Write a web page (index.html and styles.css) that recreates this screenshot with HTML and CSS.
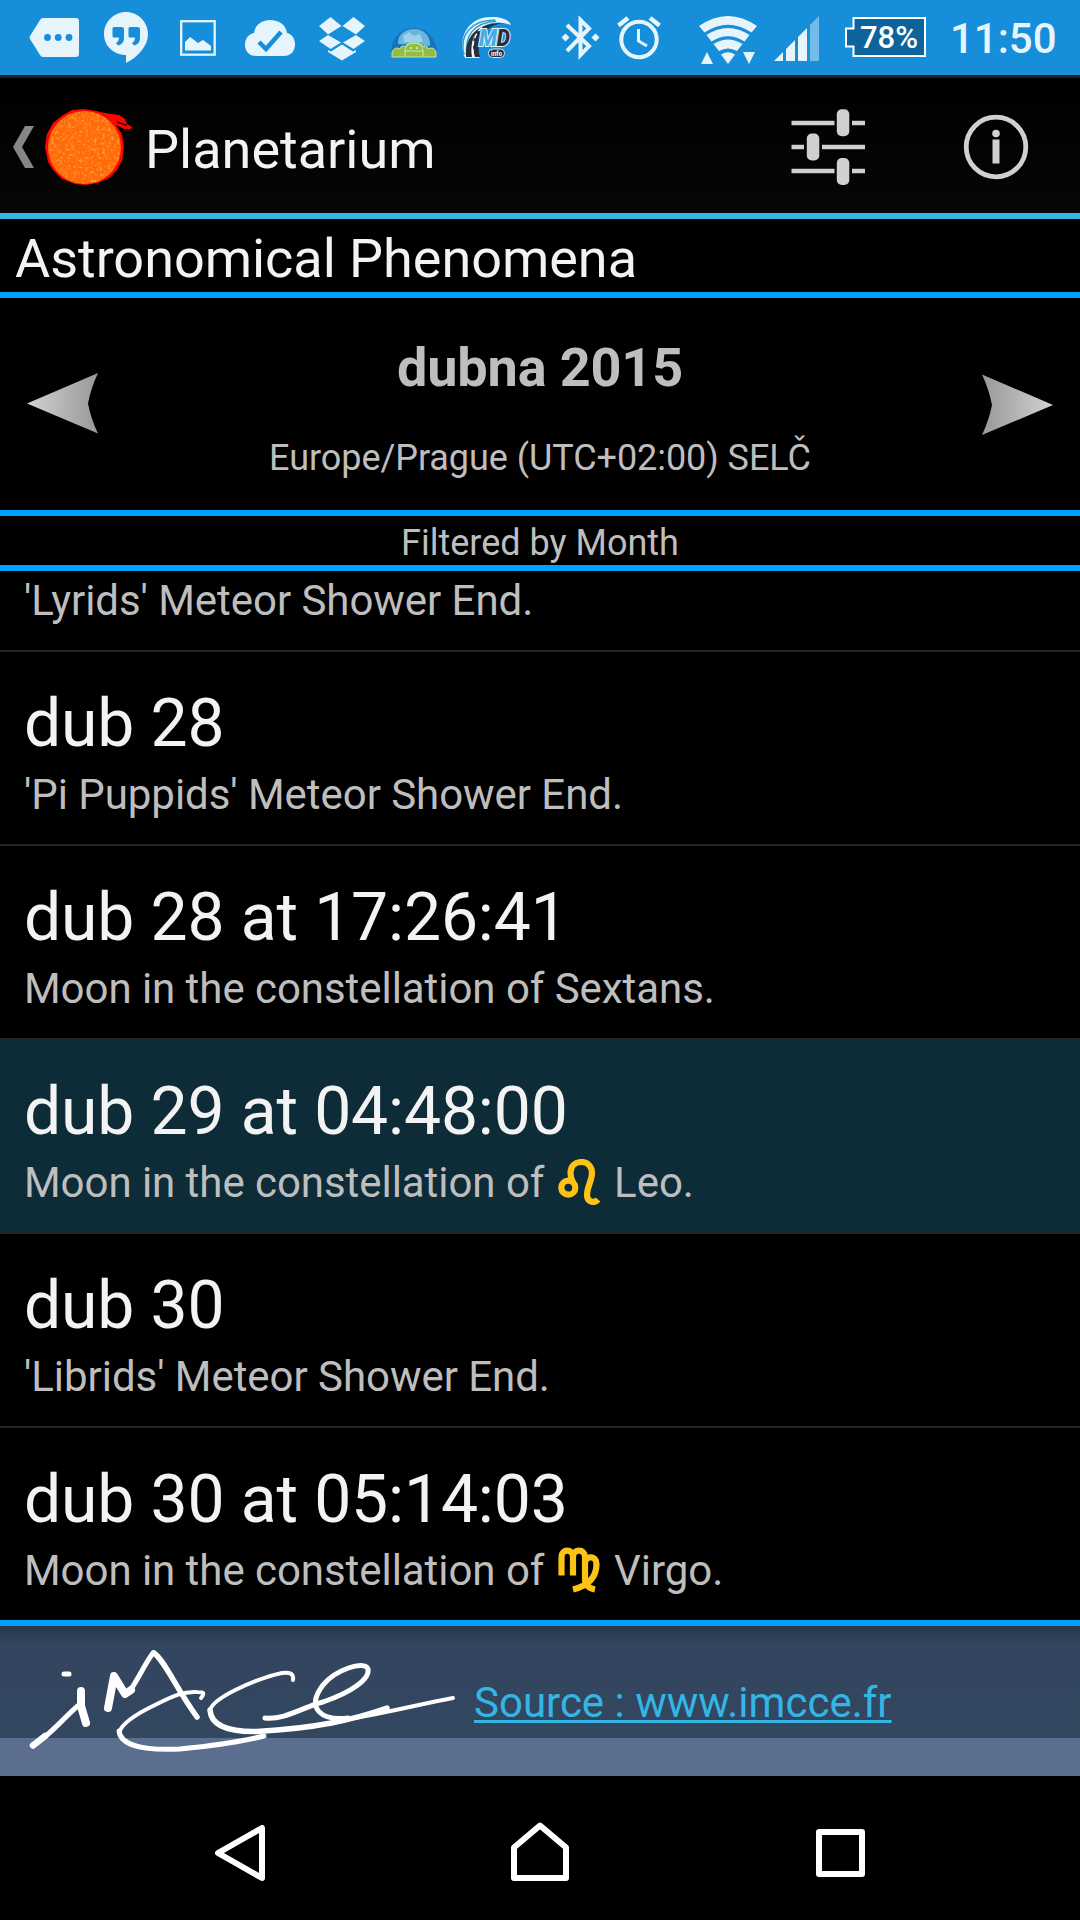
FILE: index.html
```
<!DOCTYPE html>
<html lang="en">
<head>
    <meta charset="UTF-8">
    <meta name="viewport" content="width=device-width, initial-scale=1.0">
    <title>Planetarium</title>
    <link rel="stylesheet" href="styles.css">
</head>
<body>
    <div class="status-bar">
        <!-- notifications -->
        <svg width="102" height="75" viewBox="0 0 102 75">
            <path d="M43 18H76Q79 18 79 21V54Q79 57 76 57H43Q41 57 40 55L30 39Q29 37.500 30 36L40 20Q41 18 43 18Z" fill="#e6f4fc"/>
            <g fill="#168eda"><circle cx="47.500" cy="37.500" r="3.400"/><circle cx="58.200" cy="37.500" r="3.400"/><circle cx="69" cy="37.500" r="3.400"/></g>
        </svg>
        <svg width="60" height="75" viewBox="102 0 60 75">
            <path d="M126 12C138 12 148 22 148 34C148 46 138 57 126 63V55C114 55 104 46 104 34C104 22 114 12 126 12Z" fill="#e6f4fc"/>
            <path d="M114 27H122Q124 27 124 29V38Q124 44 118 45.500L116 43Q119 41 119 37.500H114Q112.500 37.500 112.500 36V28.500Q112.500 27 114 27ZM130 27H138Q140 27 140 29V38Q140 44 134 45.500L132 43Q135 41 135 37.500H130Q128.500 37.500 128.500 36V28.500Q128.500 27 130 27Z" fill="#168eda"/>
        </svg>
        <svg width="68" height="75" viewBox="162 0 68 75">
            <rect x="181.200" y="21.200" width="33.500" height="33.500" fill="none" stroke="#e6f4fc" stroke-width="2.300"/>
            <path d="M185 50.500V42L190 37L198 43L203 40L211 46V50.500Z" fill="#e6f4fc"/>
        </svg>
        <svg width="78" height="75" viewBox="230 0 78 75">
            <path d="M256 56C249 56 245 51 245 45C245 38 249 34 254 33C255 25 262 20 270 20C279 20 286 25 287 33C292 34 295 39 295 44C295 51 291 56 284 56Z" fill="#e6f4fc"/>
            <path d="M259 42L266 49L281 32" fill="none" stroke="#168eda" stroke-width="4.500"/>
        </svg>
        <svg width="72" height="75" viewBox="308 0 72 75">
            <path d="M330.500 17L341.500 26L328 34.500L319 26ZM353.500 17L365 26L356 34.500L342.500 26ZM319 41L328 35L341 42.500L330.500 49ZM365 41L356 35L343 42.500L353.500 49ZM328 50L331 51.500L342 44.500L353 51.500L356 50V52L342 60.500L328 52Z" fill="#e6f4fc"/>
        </svg>
        <svg width="68" height="75" viewBox="380 0 68 75">
            <path d="M391 56C390 38 401 28 414 28C427 28 438 39 437 56Z" fill="#1574b8"/>
            <path d="M398 44C397 34 406 29 414 29C424 29 431 36 430 46Z" fill="#69b5de"/>
            <path d="M403 36L409 32L414 36L420 34L423 42H404Z" fill="#9ed0e8"/>
            <path d="M392 57V52Q395 46 400 49Q402 44 405 47Q407 43 414 43Q421 43 423 47Q427 44 428 49Q434 46 436 52V57Z" fill="#91bd45" stroke="#cde1a0" stroke-width="1"/>
            <path d="M405 57V51Q406 43 414 43Q422 43 423 51V57M409 41L411 44M419 41L417 44M404 51H424" fill="none" stroke="#cde1a0" stroke-width="1"/>
            <g fill="#e4efcf"><circle cx="411" cy="48" r="1"/><circle cx="417" cy="48" r="1"/></g>
        </svg>
        <svg width="100" height="75" viewBox="448 0 100 75">
            <path d="M465 58C457 39 467 16 493 17C502 17 509 20 511 25C494 19 481 24 476 36C473 43 475 53 480 58Z" fill="#e6f4fc"/>
            <path d="M464 55C459 35 471 20 495 20M467 56C464 35 474 23 496 21" fill="none" stroke="#379fcb" stroke-width="1.500"/>
            <path d="M466 57C465 37 476 23 503 23C485 26 475 38 480 57H475C471 44 473 34 480 27C473 34 470 46 472 57Z" fill="#25303b"/>
            <path d="M473 54C472 43 475 32 483 27" fill="none" stroke="#fff" stroke-width="1.300" stroke-dasharray="5 3"/>
            <text x="479" y="46" class="md-text" fill="#45aee4" textLength="31" lengthAdjust="spacingAndGlyphs">M<tspan fill="#25303b">D</tspan></text>
            <rect x="488.500" y="49" width="16" height="8.500" rx="4" fill="#25303b" stroke="#d9e9f1"/>
            <text x="491" y="56" class="info-text" textLength="11" lengthAdjust="spacingAndGlyphs">info</text>
        </svg>
        <!-- system -->
        <svg width="62" height="75" viewBox="548 0 62 75">
            <path d="M567 25L589 46L580.500 55V20L589 28.500L567 51" fill="none" stroke="#e6f4fc" stroke-width="4"/>
            <path d="M561.500 37.500L565.500 33.500L569.500 37.500L565.500 41.500ZM591.500 37.500L595.500 33.500L599.500 37.500L595.500 41.500Z" fill="#e6f4fc"/>
        </svg>
        <svg width="80" height="75" viewBox="610 0 80 75">
            <circle cx="639" cy="39.500" r="17.700" fill="none" stroke="#e6f4fc" stroke-width="4"/>
            <path d="M638.500 29V41L647 46" fill="none" stroke="#e6f4fc" stroke-width="3"/>
            <path d="M618.500 25.500L628 18M659.500 25.500L650 18" stroke="#e6f4fc" stroke-width="4.500"/>
        </svg>
        <svg width="76" height="75" viewBox="690 0 76 75">
            <path d="M699 26Q728 6 757 26L751.500 32.500Q728 17 704.500 32.500ZM706.500 35Q728 21 749.500 35L744.500 41.500Q728 31 711.500 41.500ZM713.500 44Q728 35 742.500 44L737 51Q728 46 719 51ZM721 54.500Q728 50 735 54.500L728 64Z" fill="#e6f4fc"/>
            <path d="M701 64L707 52L713 64ZM743 52H755L749 64Z" fill="#e6f4fc"/>
        </svg>
        <svg width="74" height="75" viewBox="766 0 74 75">
            <path d="M774 61L783 52V61ZM786 49L795 40V61H786ZM798 37L807 28V61H798Z" fill="#e6f4fc"/>
            <path d="M810 25L819 16V61H810Z" fill="#73bbe9"/>
        </svg>
        <svg width="110" height="75" viewBox="840 0 110 75">
            <path d="M853.500 18H925V56H853.500V46.500H846V28.500H853.500Z" fill="#0d639b" stroke="#fff" stroke-width="2"/>
            <text x="860" y="48" class="battery-text">78%</text>
        </svg>
        <span class="clock">11:50</span>
    </div>

    <div class="action-bar">
        <svg width="145" height="135" viewBox="0 78 145 135">
            <defs>
                <filter id="grain" x="0" y="0" width="1" height="1">
                    <feTurbulence type="fractalNoise" baseFrequency="0.35" numOctaves="2" seed="4"/>
                    <feColorMatrix values="0 0 0 0 1  0 0 0 0 .65  0 0 0 0 .15  1.500 0 0 0 -.72"/>
                    <feComposite in2="SourceGraphic" operator="in"/>
                </filter>
            </defs>
            <path d="M34 126H25L13 147L25 168H34L22 147Z" fill="#868686"/>
            <path d="M63 115L72 110L84 109L96 111L105 113L119 115L125 119L127 124L132 127L131 129L124 129L116 125L122 134L124 147L122 161L117 170L109 178L98 183L86 185L75 184L62 179L53 170L48 162L45 147L47 134L53 123Z" fill="#fa0500"/>
            <circle cx="84.500" cy="147.500" r="36.500" fill="#ff6a0a"/>
            <circle cx="84.500" cy="147.500" r="36.500" filter="url(#grain)"/>
            <path d="M117 122L127 125.500" stroke="#100" stroke-width="1.200"/>
        </svg>
        <span class="app-name">Planetarium</span>
        <svg width="150" height="135" viewBox="750 78 150 135">
            <path d="M791.500 123H834.500M852 123H865M791.500 147H804M822 147H865M791.500 171H834.500M852 171H865" stroke="#d0d0d0" stroke-width="4.500"/>
            <g fill="#d0d0d0">
                <rect x="836.800" y="109.300" width="12.500" height="27" rx="5"/>
                <rect x="806.800" y="133.500" width="12.500" height="27" rx="5"/>
                <rect x="836.800" y="158" width="12.500" height="27" rx="5"/>
            </g>
        </svg>
        <svg width="180" height="135" viewBox="900 78 180 135">
            <circle cx="996" cy="147" r="29.800" fill="none" stroke="#d0d0d0" stroke-width="4.800"/>
            <circle cx="996" cy="133.500" r="3.800" fill="#d0d0d0"/>
            <rect x="992.500" y="139.500" width="7" height="24" fill="#d0d0d0"/>
        </svg>
    </div>

    <h1 class="page-title">Astronomical Phenomena</h1>

    <div class="month-picker">
        <svg width="120" height="212" viewBox="0 298 120 212">
            <linearGradient id="prev"><stop offset="0" stop-color="#d2d2d2"/><stop offset="1" stop-color="#989898"/></linearGradient>
            <path d="M27 403.500L98 373Q91 388 88 403.500Q91 419 98 433.500Z" fill="url(#prev)"/>
        </svg>
        <div class="month">
            <div class="month-name">dubna 2015</div>
            <div class="timezone">Europe/Prague (UTC+02:00) SELČ</div>
        </div>
        <svg width="120" height="212" viewBox="960 298 120 212">
            <linearGradient id="next"><stop offset="0" stop-color="#989898"/><stop offset="1" stop-color="#d2d2d2"/></linearGradient>
            <path d="M1053 405L982 374.500Q989 389.500 992 405Q989 420 982 435Z" fill="url(#next)"/>
        </svg>
    </div>

    <div class="filter">Filtered by Month</div>

    <ul class="events">
        <li class="first">
            <p>'Lyrids' Meteor Shower End.</p>
        </li>
        <li>
            <h2>dub 28</h2>
            <p>'Pi Puppids' Meteor Shower End.</p>
        </li>
        <li>
            <h2>dub 28 at 17:26:41</h2>
            <p>Moon in the constellation of Sextans.</p>
        </li>
        <li class="current">
            <h2>dub 29 at 04:48:00</h2>
            <p>Moon in the constellation of
                <svg class="sign" width="42" height="46" viewBox="0 0 42 46"><circle cx="10.300" cy="28.700" r="7"/><path d="M15 24C13 20 12.500 17 12.500 14C12.500 7 17 3 23.500 3C30 3 34 8 34 14C34 22 29 27 29 36C29 43 36 45 40 40.500"/></svg>
                Leo.</p>
        </li>
        <li>
            <h2>dub 30</h2>
            <p>'Librids' Meteor Shower End.</p>
        </li>
        <li>
            <h2>dub 30 at 05:14:03</h2>
            <p>Moon in the constellation of
                <svg class="sign" width="42" height="46" viewBox="0 0 42 46"><path d="M3.500 28.500V10C3.500 1.500 15 1.500 15 10V28.500M15 10C15 1.500 27 1.500 27 10V32C27 38 30 41 37 42.500M27 15C29 8 38.500 9 38.500 17C38.500 31 29 39 15 42.500"/></svg>
                Virgo.</p>
        </li>
    </ul>

    <div class="source">
        <svg width="474" height="150" viewBox="0 1626 474 150">
            <g fill="none" stroke="#fff" stroke-linecap="round" stroke-linejoin="round">
                <path d="M64 1674H69" stroke-width="5"/>
                <path d="M33 1745C48 1738 64 1717 80 1704" stroke-width="5"/>
                <path d="M33 1745.500L45 1736" stroke-width="6.500"/>
                <path d="M81 1691L81 1706L86 1723" stroke-width="8"/>
                <path d="M108 1708L114 1676L125 1694L131 1690" stroke-width="8"/>
                <path d="M129 1692C138 1680 144 1665 153 1653" stroke-width="5"/>
                <path d="M154 1653C165 1661 176 1688 197 1717" stroke-width="5.500"/>
                <path d="M201 1698C205 1693 204 1692 197 1692C184 1691 173 1696 157 1704C138 1713 121 1724 119 1733" stroke-width="4"/>
                <path d="M119 1731C120 1743 138 1751 180 1749C212 1746 240 1742 264 1736" stroke-width="5"/>
                <path d="M293 1680C294 1673 289 1672 282 1673C258 1678 211 1698 210 1711" stroke-width="4"/>
                <path d="M210 1710C211 1726 229 1732 257 1731.500C316 1728 353 1720 387 1708" stroke-width="5.500"/>
                <path d="M265 1718C285 1720 303 1707 323 1702C352 1692 370 1679 368 1669C364 1660 335 1670 323 1685C305 1709 322 1721 348 1718" stroke-width="5"/>
                <path d="M348 1719C388 1713 420 1704 453 1698" stroke-width="4"/>
            </g>
        </svg>
        <a href="#">Source : www.imcce.fr</a>
    </div>

    <div class="nav-bar">
        <svg width="1080" height="144" viewBox="0 1776 1080 144" fill="none" stroke="#fff" stroke-width="6" stroke-linejoin="round">
            <path d="M218 1853L262 1828V1878Z"/>
            <path d="M514 1878V1847.500L540 1825.500L566 1847.500V1878Z"/>
            <rect x="819" y="1832" width="43" height="42"/>
        </svg>
    </div>
</body>
</html>
```
FILE: styles.css
```
* {
    box-sizing: border-box;
}

body {
    margin: 0;
    width: 1080px;
    height: 1920px;
    overflow: hidden;
    background-color: black;
    color: #bebebe;
    font-family: Roboto, sans-serif;
}

svg {
    display: block;
    flex-shrink: 0;
}

h1, h2, p {
    margin: 0;
    font-weight: 400;
}

.status-bar {
    display: flex;
    height: 75px;
    background-color: #168eda;
}

.md-text {
    font-size: 23px;
    font-weight: 900;
    font-style: italic;
    stroke: #e6f4fc;
    stroke-width: 2px;
    paint-order: stroke;
}

.info-text {
    font-size: 7px;
    font-weight: 700;
    fill: white;
}

.battery-text {
    font-size: 31px;
    font-weight: 500;
    fill: white;
}

.clock {
    color: #e6f4fc;
    font-size: 42px;
    font-weight: 500;
    line-height: 78px;
}

.action-bar {
    display: flex;
    height: 144px;
    border-top: 3px solid #202020;
    border-bottom: 6px solid #33b5e5;
    background: linear-gradient(#000, #060606);
}

.app-name {
    flex: 1;
    color: #f3f3f3;
    font-size: 54px;
    line-height: 143px;
}

.page-title {
    height: 79px;
    padding-left: 15px;
    border-bottom: 6px solid #00a2ff;
    color: #f3f3f3;
    font-size: 54px;
    line-height: 79px;
    letter-spacing: -0.04px;
}

.month-picker {
    display: flex;
    height: 218px;
    border-bottom: 6px solid #00a2ff;
}

.month {
    flex: 1;
    padding-top: 37px;
    text-align: center;
}

.month-name {
    font-size: 54px;
    font-weight: 700;
    line-height: 66px;
    letter-spacing: -0.15px;
}

.timezone {
    margin-top: 36px;
    font-size: 36px;
    line-height: 42px;
    letter-spacing: -0.06px;
}

.filter {
    height: 55px;
    border-bottom: 6px solid #00a2ff;
    font-size: 36px;
    line-height: 55px;
    text-align: center;
}

.events {
    margin: 0;
    padding: 0;
    list-style: none;
    border-bottom: 6px solid #00a2ff;
}

.events li {
    height: 194px;
    padding: 33px 24px 0;
    border-bottom: 2px solid #242424;
}

.events li:last-child {
    height: 192px;
    border-bottom: none;
}

.events .first {
    height: 81px;
    padding-top: 5px;
}

.events .current {
    background-color: #0e2c37;
}

.events h2 {
    color: #f3f3f3;
    font-size: 66px;
    line-height: 77px;
    letter-spacing: -0.13px;
}

.events p {
    margin-top: 8px;
    font-size: 42px;
    line-height: 49px;
    letter-spacing: -0.05px;
}

.events .first p {
    margin-top: 0;
}

.sign {
    display: inline-block;
    margin: -4px 4px -8px 3px;
    fill: none;
    stroke: #fdc216;
    stroke-width: 6.2px;
}

.source {
    display: flex;
    height: 150px;
    background: linear-gradient(#2a374d, #33455f 20px, #33475f 112px, #5b6e8f 112px);
}

.source a {
    color: #33b5e5;
    font-size: 42px;
    line-height: 154px;
    text-decoration-thickness: 3px;
    text-underline-offset: 3px;
    text-decoration-skip-ink: none;
}
```
